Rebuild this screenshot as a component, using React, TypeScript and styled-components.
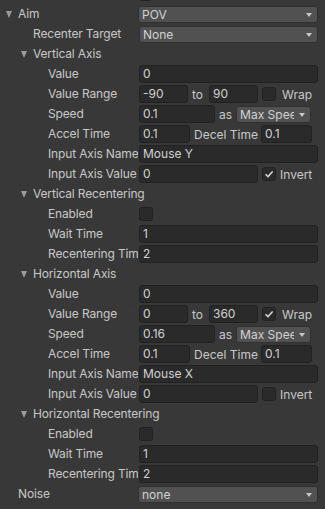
import React from "react";
import styled, { createGlobalStyle } from "styled-components";

const Global = createGlobalStyle`
  html, body {
    margin: 0;
    padding: 0;
    background: #383838;
  }
  body {
    font-family: Inter, "Noto Sans", sans-serif;
    font-size: 12px;
    color: #c8c8c8;
  }
`;

const Panel = styled.div`
  width: 325px;
  height: 509px;
  background: #383838;
  padding-top: 4px;
  box-sizing: border-box;
  overflow: hidden;
  position: relative;
`;

const TopStub = styled.div`
  position: absolute;
  left: 139px;
  top: -12px;
  width: 13px;
  height: 13px;
  border-radius: 3px;
  background: #2a2a2a;
  border: 1px solid #212121;
  box-sizing: border-box;
`;

const Row = styled.div`
  display: flex;
  align-items: center;
  height: 20px;
`;

const Label = styled.div<{ $indent: number; $open?: boolean }>`
  width: 138px;
  flex: none;
  margin-right: 1px;
  padding-left: ${(p) => 18 + p.$indent * 15}px;
  box-sizing: border-box;
  white-space: nowrap;
  letter-spacing: -0.15px;
  overflow: ${(p) => (p.$open ? "visible" : "hidden")};
  line-height: 20px;
`;

const Fold = styled.span`
  position: absolute;
  left: -12px;
  top: 5px;
  width: 0;
  height: 0;
  border-left: 3.5px solid transparent;
  border-right: 3.5px solid transparent;
  border-top: 7px solid #9a9a9a;
`;

const FoldLabel = styled.span`
  position: relative;
`;

const Values = styled.div`
  flex: 1;
  display: flex;
  align-items: center;
  margin-right: 7px;
  min-width: 0;
`;

const Field = styled.div<{ $w?: number }>`
  ${(p) => (p.$w ? `width: ${p.$w}px; flex: none;` : "flex: 1;")}
  height: 18px;
  box-sizing: border-box;
  background: #2a2a2a;
  border: 1px solid #212121;
  border-radius: 3px;
  padding-left: 3px;
  line-height: 16px;
  color: #d2d2d2;
  white-space: nowrap;
  overflow: hidden;
`;

const Drop = styled.div<{ $w?: number; $shift?: number }>`
  ${(p) => (p.$w ? `width: ${p.$w}px; flex: none;` : "flex: 1;")}
  margin-left: ${(p) => p.$shift ?? 0}px;
  height: 17px;
  box-sizing: border-box;
  background: #515151;
  border: 1px solid #303030;
  border-radius: 3px;
  padding-left: 3px;
  padding-right: 16px;
  line-height: 15px;
  color: #d2d2d2;
  white-space: nowrap;
  position: relative;
  display: flex;
  &::after {
    content: "";
    position: absolute;
    right: 5px;
    top: 6px;
    border-left: 3.5px solid transparent;
    border-right: 3.5px solid transparent;
    border-top: 4px solid #c8c8c8;
  }
`;

const DropText = styled.span`
  overflow: hidden;
  white-space: nowrap;
  flex: 1;
  min-width: 0;
`;

const Word = styled.span<{ $ml: number; $mr: number }>`
  margin-left: ${(p) => p.$ml}px;
  margin-right: ${(p) => p.$mr}px;
  white-space: nowrap;
  flex: none;
`;

const Box = styled.div<{ $ml?: number }>`
  width: 14px;
  height: 14px;
  flex: none;
  margin-left: ${(p) => p.$ml ?? 0}px;
  box-sizing: border-box;
  background: #2a2a2a;
  border: 1px solid #212121;
  border-radius: 3px;
  display: flex;
  align-items: center;
  justify-content: center;
`;

const BlueDot = styled.span`
  position: absolute;
  left: 133px;
  top: 310px;
  width: 1px;
  height: 1px;
  background: #2d3cff;
`;

function Check({ on, ml }: { on?: boolean; ml?: number }) {
  return (
    <Box $ml={ml}>
      {on && (
        <svg width="10" height="10" viewBox="0 0 10 10">
          <path d="M1.5 5.2 L4 7.6 L8.6 2.4" fill="none" stroke="#d8d8d8" strokeWidth="1.5" />
        </svg>
      )}
    </Box>
  );
}

function Select({ text, w, shift }: { text: string; w?: number; shift?: number }) {
  return (
    <Drop $w={w} $shift={shift}>
      <DropText>{text}</DropText>
    </Drop>
  );
}

function Prop({ label, indent, children }: { label: string; indent: number; children?: React.ReactNode }) {
  return (
    <Row>
      <Label $indent={indent}>{label}</Label>
      <Values>{children}</Values>
    </Row>
  );
}

function Group({ label, indent, children }: { label: string; indent: number; children?: React.ReactNode }) {
  return (
    <Row>
      <Label $indent={indent} $open>
        <FoldLabel>
          <Fold />
          {label}
        </FoldLabel>
      </Label>
      <Values>{children}</Values>
    </Row>
  );
}

function Axis({ range, wrap, speed, name, invert }: { range: [string, string]; wrap: boolean; speed: string; name: string; invert: boolean }) {
  return (
    <>
      <Prop label="Value" indent={2}>
        <Field>0</Field>
      </Prop>
      <Prop label="Value Range" indent={2}>
        <Field $w={49}>{range[0]}</Field>
        <Word $ml={4} $mr={6}>to</Word>
        <Field $w={49}>{range[1]}</Field>
        <Check on={wrap} ml={4} />
        <Word $ml={6} $mr={0}>Wrap</Word>
      </Prop>
      <Prop label="Speed" indent={2}>
        <Field $w={76}>{speed}</Field>
        <Word $ml={4} $mr={4}>as</Word>
        <Select text="Max Speed" w={75} />
      </Prop>
      <Prop label="Accel Time" indent={2}>
        <Field $w={51}>0.1</Field>
        <Word $ml={4} $mr={3}>Decel Time</Word>
        <Field $w={51}>0.1</Field>
      </Prop>
      <Prop label="Input Axis Name" indent={2}>
        <Field>{name}</Field>
      </Prop>
      <Prop label="Input Axis Value" indent={2}>
        <Field $w={119}>0</Field>
        <Check on={invert} ml={4} />
        <Word $ml={4} $mr={0}>Invert</Word>
      </Prop>
    </>
  );
}

function Recentering() {
  return (
    <>
      <Prop label="Enabled" indent={2}>
        <Check />
      </Prop>
      <Prop label="Wait Time" indent={2}>
        <Field>1</Field>
      </Prop>
      <Prop label="Recentering Time" indent={2}>
        <Field>2</Field>
      </Prop>
    </>
  );
}

export default function App() {
  return (
    <Panel>
      <Global />
      <TopStub />
      <BlueDot />
      <Group label="Aim" indent={0}>
        <Select text="POV" shift={-1} />
      </Group>
      <Prop label="Recenter Target" indent={1}>
        <Select text="None" />
      </Prop>
      <Group label="Vertical Axis" indent={1} />
      <Axis range={["-90", "90"]} wrap={false} speed="0.1" name="Mouse Y" invert={true} />
      <Group label="Vertical Recentering" indent={1} />
      <Recentering />
      <Group label="Horizontal Axis" indent={1} />
      <Axis range={["0", "360"]} wrap={true} speed="0.16" name="Mouse X" invert={false} />
      <Group label="Horizontal Recentering" indent={1} />
      <Recentering />
      <Prop label="Noise" indent={0}>
        <Select text="none" shift={-1} />
      </Prop>
    </Panel>
  );
}
